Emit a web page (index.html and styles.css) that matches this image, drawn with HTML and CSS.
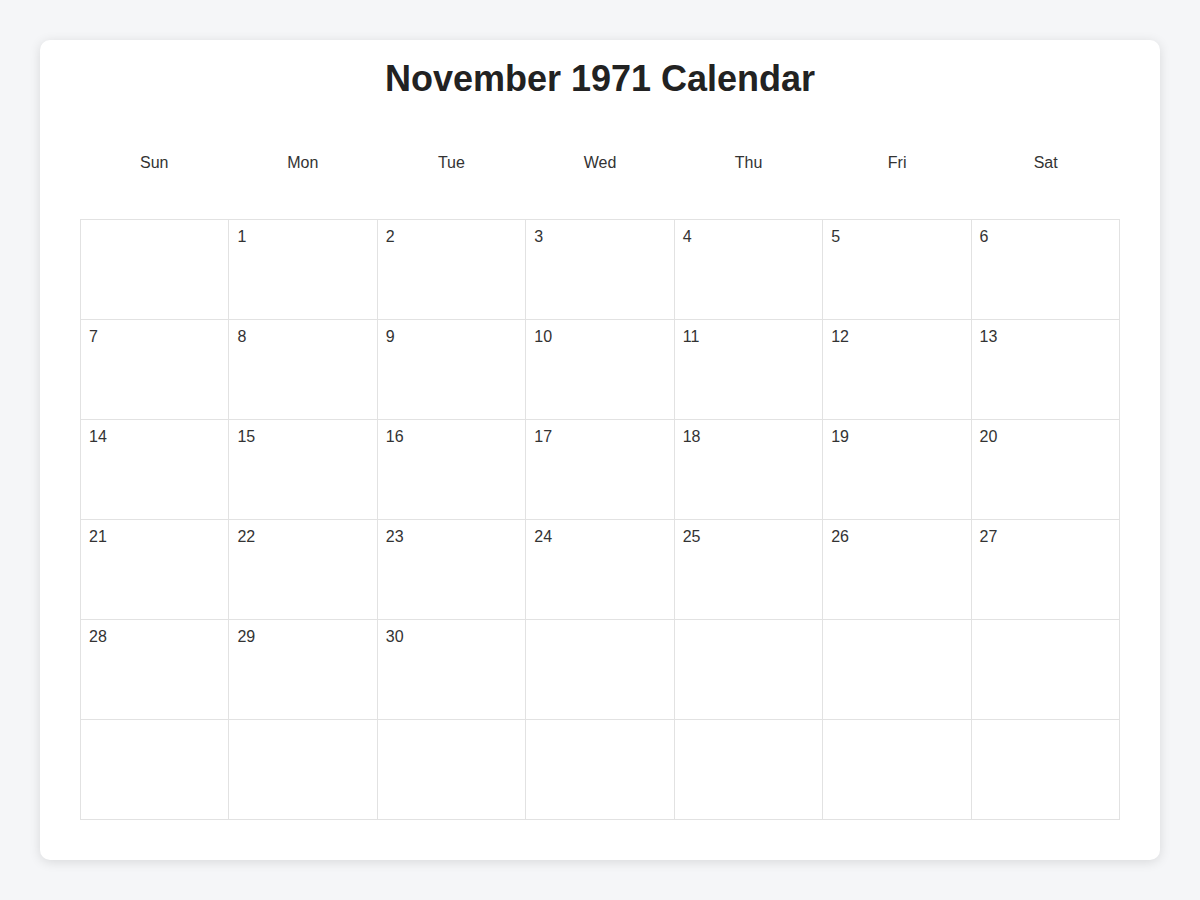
FILE: index.html
```html
<!DOCTYPE html>
<html lang="en">
<head>
    <meta charset="UTF-8">
    <title>November 1971 Calendar</title>
    <link rel="stylesheet" href="styles.css">
</head>
<body>
    <div class="calendar">
        <h1>November 1971 Calendar</h1>
        <div class="weekdays">
            <div>Sun</div>
            <div>Mon</div>
            <div>Tue</div>
            <div>Wed</div>
            <div>Thu</div>
            <div>Fri</div>
            <div>Sat</div>
        </div>
        <div class="days" id="days"></div>
    </div>
    <script>
        const days = document.getElementById('days');
        const firstDay = 1; // Monday
        for (let i = 0; i < 42; i++) {
            const cell = document.createElement('div');
            cell.className = 'day';
            const n = i - firstDay + 1;
            if (n >= 1 && n <= 30) cell.textContent = n;
            days.appendChild(cell);
        }
    </script>
</body>
</html>
```

FILE: styles.css
```css
* {
    margin: 0;
    padding: 0;
    box-sizing: border-box;
}
body {
    font-family: 'Liberation Sans', Arial, sans-serif;
    background: #f5f6f8;
    color: #333;
    padding: 40px;
}
.calendar {
    background: #fff;
    border-radius: 10px;
    box-shadow: 0 2px 12px rgba(0, 0, 0, 0.12);
    padding: 18px 40px 40px;
}
.calendar h1 {
    text-align: center;
    font-size: 36px;
    line-height: 41px;
    font-weight: 700;
    color: #222;
    margin-bottom: 45px;
}
.weekdays {
    display: grid;
    grid-template-columns: repeat(7, 1fr);
    margin-bottom: 37px;
}
.weekdays div {
    text-align: center;
    padding: 10px;
    font-size: 16px;
    line-height: 18px;
    color: #333;
}
.days {
    display: grid;
    grid-template-columns: repeat(7, 1fr);
    border-top: 1px solid #e2e2e2;
    border-left: 1px solid #e2e2e2;
}
.day {
    height: 100px;
    border-right: 1px solid #e2e2e2;
    border-bottom: 1px solid #e2e2e2;
    padding: 8px 8px;
    font-size: 16px;
    line-height: 18px;
    color: #333;
}
```
